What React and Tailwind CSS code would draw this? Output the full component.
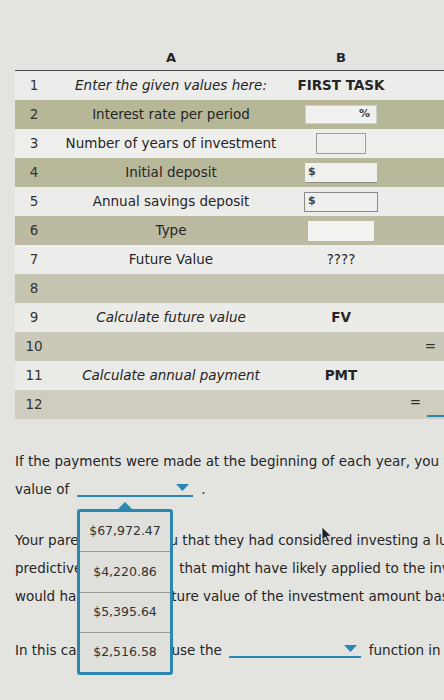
import React from "react";

const rows = [
  { n: "1", a: "Enter the given values here:", aCls: "italic", b: "FIRST TASK", bCls: "font-bold", bg: "bg-[#ececea]" },
  { n: "2", a: "Interest rate per period", input: "pct", bg: "bg-[#b6b797]" },
  { n: "3", a: "Number of years of investment", input: "plain", bg: "bg-[#eeeeec]" },
  { n: "4", a: "Initial deposit", input: "dollar", bg: "bg-[#b8b89b]" },
  { n: "5", a: "Annual savings deposit", input: "dollar2", bg: "bg-[#ececea]" },
  { n: "6", a: "Type", input: "type", bg: "bg-[#bcbba1]" },
  { n: "7", a: "Future Value", b: "????", bg: "bg-[#ededeb]" },
  { n: "8", a: "", bg: "bg-[#c5c4b1]" },
  { n: "9", a: "Calculate future value", aCls: "italic", b: "FV", bCls: "font-bold", bg: "bg-[#ebebe8]" },
  { n: "10", a: "", bg: "bg-[#cac9b9]", eq: "ten" },
  { n: "11", a: "Calculate annual payment", aCls: "italic", b: "PMT", bCls: "font-bold", bg: "bg-[#eaeae7]" },
  { n: "12", a: "", bg: "bg-[#cecdc0]", eq: "twelve" },
];

function Input({ kind }) {
  if (kind === "pct")
    return (
      <div className="w-[72px] h-[19px] bg-[#f1f1ef] border border-[#cfcfc8] flex items-center justify-end pr-[6px] text-[11px] font-bold text-[#444]">%</div>
    );
  if (kind === "plain")
    return <div className="w-[50px] h-[21px] bg-[#efefed] border border-[#9c9c98]" />;
  if (kind === "dollar")
    return (
      <div className="w-[72px] h-[20px] bg-[#f0f0ee] border-b border-[#8e8e88] flex items-center pl-[3px] text-[11px] font-bold text-[#444]">$</div>
    );
  if (kind === "dollar2")
    return (
      <div className="w-[74px] h-[20px] bg-[#efefed] border border-[#8a8a86] flex items-center pl-[3px] text-[11px] font-bold text-[#444]">$</div>
    );
  if (kind === "type") return <div className="w-[66px] h-[20px] bg-[#f2f2f0]" />;
  return null;
}

function Caret() {
  return (
    <svg width="13" height="7" viewBox="0 0 13 7" className="absolute right-[4px] bottom-[4px]">
      <path d="M0 0 H13 L6.5 7 Z" fill="#2b86b2" />
    </svg>
  );
}

export default function App() {
  return (
    <div className="relative w-[444px] h-[700px] overflow-hidden bg-[#e3e3e0] text-[13.5px] text-[#252525] font-['DejaVu_Sans',sans-serif] whitespace-nowrap">
      <div className="h-[45px]" />
      <div className="ml-[15px] grid grid-cols-[38px_236px_104px_1fr] h-[26px] items-center border-b-[1.5px] border-[#4a4a4a] font-bold text-[13px]">
        <div />
        <div className="text-center">A</div>
        <div className="text-center">B</div>
        <div />
      </div>
      <div className="ml-[15px]">
        {rows.map((r) => (
          <div key={r.n} className={`grid grid-cols-[38px_236px_104px_1fr] h-[29px] items-center ${r.bg}`}>
            <div className="text-center text-[#333]">{r.n}</div>
            <div className={`text-center ${r.aCls || ""}`}>{r.a}</div>
            <div className={`flex justify-center ${r.bCls || ""}`}>
              {r.input ? <Input kind={r.input} /> : r.b}
            </div>
            <div className="flex justify-end items-center h-full">
              {r.eq === "ten" && <span className="mr-[8px] text-[#333]">=</span>}
              {r.eq === "twelve" && (
                <div className="flex items-end h-full pb-[2px]">
                  <span className="mr-[6px] text-[#333] mb-[5px]">=</span>
                  <div className="w-[17px] border-b-2 border-[#2b86b2]" />
                </div>
              )}
            </div>
          </div>
        ))}
      </div>

      <div className="pl-[15px] leading-[28px]">
        <p className="mt-[28px]">
          If the payments were made at the beginning of each year, you would have a future
          <br />
          value of
          <span className="relative inline-block align-[-3px] ml-[8px] w-[116px] h-[20px] border-b-2 border-[#2b86b2]">
            <Caret />
          </span>
          <span className="ml-[8px]">.</span>
        </p>
        <p className="mt-[23px]">
          Your pare<span className="inline-block w-[91px]" />u that they had considered investing a lump sum
          <br />
          predictive<span className="inline-block w-[97px]" />that might have likely applied to the investment
          <br />
          would ha<span className="inline-block w-[95px]" />ture value of the investment amount based on
        </p>
        <p className="mt-[26px]">
          In this ca<span className="inline-block w-[95px]" />use the
          <span className="relative inline-block align-[-3px] ml-[7px] w-[132px] h-[20px] border-b-2 border-[#2b86b2]">
            <Caret />
          </span>
          <span className="ml-[8px]">function in Excel.</span>
        </p>
      </div>

      {/* dropdown menu overlay */}
      <div className="absolute left-[77px] top-[502px] w-[96px]">
        <svg width="14" height="7" viewBox="0 0 14 7" className="block ml-[41px]">
          <path d="M0 7 L7 0 L14 7 Z" fill="#2b86b2" />
        </svg>
        <div className="h-[166px] border-[3px] border-[#2b86b2] rounded-[3px] bg-[#dfdfdb] flex flex-col text-[12.5px] text-[#333]">
          {["$67,972.47", "$4,220.86", "$5,395.64", "$2,516.58"].map((v, i) => (
            <div key={v} className={`flex-1 flex items-center justify-center ${i > 0 ? "border-t border-[#9a9a96]" : ""}`}>
              {v}
            </div>
          ))}
        </div>
      </div>

      {/* mouse pointer */}
      <svg width="12" height="18" viewBox="0 0 12 18" className="absolute left-[321px] top-[526px]">
        <path d="M1 1 L1 14 L4.2 11 L6.8 16.5 L8.8 15.6 L6.3 10.2 L10.5 10.2 Z" fill="#222" stroke="#eee" strokeWidth="0.8" />
      </svg>
    </div>
  );
}
